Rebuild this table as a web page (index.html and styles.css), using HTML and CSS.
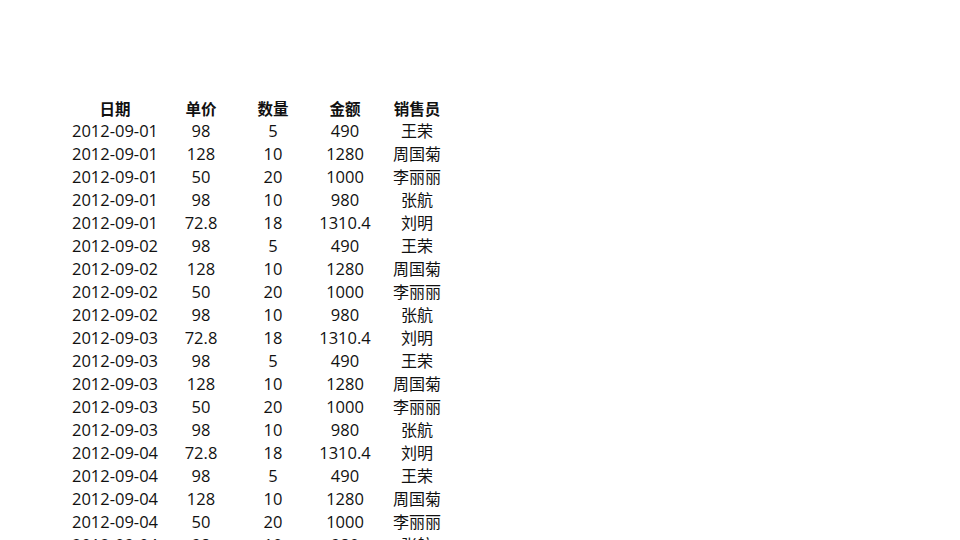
FILE: index.html
```html
<!DOCTYPE html>
<html lang="zh">
<head>
<meta charset="utf-8">
<link rel="stylesheet" href="styles.css">
</head>
<body>
<div class="sheet">
  <div class="row head"><span>日期</span><span>单价</span><span>数量</span><span>金额</span><span>销售员</span></div>
  <div class="row"><span>2012-09-01</span><span>98</span><span>5</span><span>490</span><span class="cn">王荣</span></div>
  <div class="row"><span>2012-09-01</span><span>128</span><span>10</span><span>1280</span><span class="cn">周国菊</span></div>
  <div class="row"><span>2012-09-01</span><span>50</span><span>20</span><span>1000</span><span class="cn">李丽丽</span></div>
  <div class="row"><span>2012-09-01</span><span>98</span><span>10</span><span>980</span><span class="cn">张航</span></div>
  <div class="row"><span>2012-09-01</span><span>72.8</span><span>18</span><span>1310.4</span><span class="cn">刘明</span></div>
  <div class="row"><span>2012-09-02</span><span>98</span><span>5</span><span>490</span><span class="cn">王荣</span></div>
  <div class="row"><span>2012-09-02</span><span>128</span><span>10</span><span>1280</span><span class="cn">周国菊</span></div>
  <div class="row"><span>2012-09-02</span><span>50</span><span>20</span><span>1000</span><span class="cn">李丽丽</span></div>
  <div class="row"><span>2012-09-02</span><span>98</span><span>10</span><span>980</span><span class="cn">张航</span></div>
  <div class="row"><span>2012-09-03</span><span>72.8</span><span>18</span><span>1310.4</span><span class="cn">刘明</span></div>
  <div class="row"><span>2012-09-03</span><span>98</span><span>5</span><span>490</span><span class="cn">王荣</span></div>
  <div class="row"><span>2012-09-03</span><span>128</span><span>10</span><span>1280</span><span class="cn">周国菊</span></div>
  <div class="row"><span>2012-09-03</span><span>50</span><span>20</span><span>1000</span><span class="cn">李丽丽</span></div>
  <div class="row"><span>2012-09-03</span><span>98</span><span>10</span><span>980</span><span class="cn">张航</span></div>
  <div class="row"><span>2012-09-04</span><span>72.8</span><span>18</span><span>1310.4</span><span class="cn">刘明</span></div>
  <div class="row"><span>2012-09-04</span><span>98</span><span>5</span><span>490</span><span class="cn">王荣</span></div>
  <div class="row"><span>2012-09-04</span><span>128</span><span>10</span><span>1280</span><span class="cn">周国菊</span></div>
  <div class="row"><span>2012-09-04</span><span>50</span><span>20</span><span>1000</span><span class="cn">李丽丽</span></div>
  <div class="row"><span>2012-09-04</span><span>98</span><span>10</span><span>980</span><span class="cn">张航</span></div>
</div>
</body>
</html>
```
FILE: styles.css
```css
html, body {
  margin: 0;
  padding: 0;
  background: #ffffff;
  overflow: hidden;
}
body {
  width: 960px;
  height: 540px;
  font-family: "Open Sans", "Noto Sans CJK SC", sans-serif;
  color: #111111;
  font-size: 16.5px;
}
.sheet {
  padding: 98px 0 0 65px;
  display: flex;
  flex-direction: column;
}
.row {
  display: grid;
  grid-template-columns: 100px 72px 72px 72px 72px;
  height: 23px;
  align-items: center;
  line-height: 23px;
}
.row span {
  text-align: center;
  white-space: nowrap;
}
.row .cn {
  font-family: "Noto Sans CJK SC", sans-serif;
  font-size: 16px;
}
.row.head {
  height: 21px;
  line-height: 21px;
  font-weight: bold;
  font-family: "Noto Sans CJK SC", sans-serif;
  font-size: 15.5px;
}
```
